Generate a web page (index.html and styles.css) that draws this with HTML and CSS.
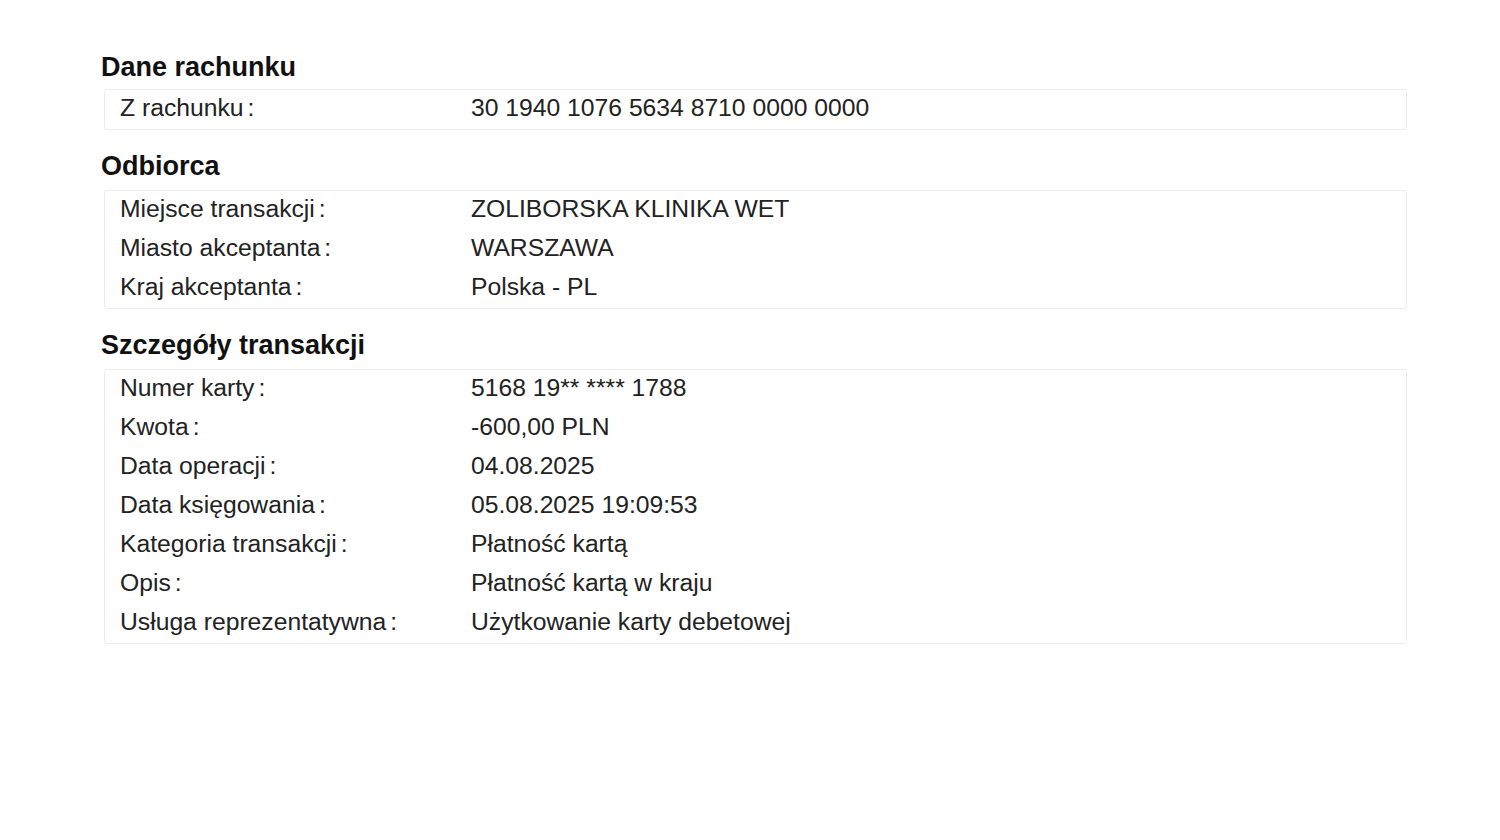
FILE: index.html
```html
<!DOCTYPE html>
<html lang="pl">
<head>
  <meta charset="UTF-8">
  <meta name="viewport" content="width=device-width, initial-scale=1.0">
  <title>Szczegóły transakcji</title>
  <link rel="stylesheet" href="styles.css">
</head>
<body>
  <div class="details">
    <h2>Dane rachunku</h2>
    <div class="box">
      <div class="row"><span class="label">Z rachunku<span class="colon">:</span></span><span class="value">30 1940 1076 5634 8710 0000 0000</span></div>
    </div>

    <h2>Odbiorca</h2>
    <div class="box">
      <div class="row"><span class="label">Miejsce transakcji<span class="colon">:</span></span><span class="value">ZOLIBORSKA KLINIKA WET</span></div>
      <div class="row"><span class="label">Miasto akceptanta<span class="colon">:</span></span><span class="value">WARSZAWA</span></div>
      <div class="row"><span class="label">Kraj akceptanta<span class="colon">:</span></span><span class="value">Polska - PL</span></div>
    </div>

    <h2>Szczegóły transakcji</h2>
    <div class="box">
      <div class="row"><span class="label">Numer karty<span class="colon">:</span></span><span class="value">5168 19** **** 1788</span></div>
      <div class="row"><span class="label">Kwota<span class="colon">:</span></span><span class="value">-600,00 PLN</span></div>
      <div class="row"><span class="label">Data operacji<span class="colon">:</span></span><span class="value">04.08.2025</span></div>
      <div class="row"><span class="label">Data księgowania<span class="colon">:</span></span><span class="value">05.08.2025 19:09:53</span></div>
      <div class="row"><span class="label">Kategoria transakcji<span class="colon">:</span></span><span class="value">Płatność kartą</span></div>
      <div class="row"><span class="label">Opis<span class="colon">:</span></span><span class="value">Płatność kartą w kraju</span></div>
      <div class="row"><span class="label">Usługa reprezentatywna<span class="colon">:</span></span><span class="value">Użytkowanie karty debetowej</span></div>
    </div>
  </div>
</body>
</html>
```

FILE: styles.css
```css
body {
  margin: 0;
  background-color: #fff;
  font-family: "Liberation Sans", Arial, sans-serif;
  color: #222;
}

.details {
  padding: 49px 93px 0 101px;
}

h2 {
  margin: 18px 0 6px;
  font-size: 27px;
  line-height: 36px;
  font-weight: bold;
  color: #111;
}

h2:first-child {
  margin-top: 0;
  margin-bottom: 4px;
}

.box {
  margin-left: 3px;
  padding-left: 15px;
  border: 1px solid #ececec;
  border-radius: 3px;
}

.row {
  display: flex;
  font-size: 24.7px;
  line-height: 35px;
  padding-bottom: 4px;
}

.label {
  width: 351px;
  flex-shrink: 0;
}

.colon {
  margin-left: 4px;
}
```
